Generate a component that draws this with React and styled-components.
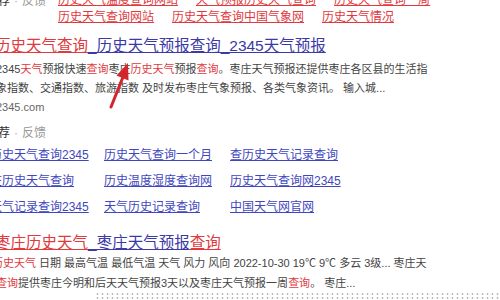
import styled, { createGlobalStyle } from "styled-components";

const sans = `"Liberation Sans", "Noto Sans CJK SC", sans-serif`;

const GlobalStyle = createGlobalStyle`
  html, body {
    margin: 0;
    padding: 0;
    background: #ffffff;
    overflow: hidden;
  }
`;

const topRows = [
  ["历史天气温度查询网站", "天气预报历史天气查询", "历史天气查询一周"],
  ["历史天气查询网站", "历史天气查询中国气象网", "历史天气情况"],
];

const related = [
  "查历史天气查询2345",
  "历史天气查询一个月",
  "查历史天气记录查询",
  "枣庄历史天气查询",
  "历史温度湿度查询网",
  "历史天气查询网2345",
  "查天气记录查询2345",
  "天气历史记录查询",
  "中国天气网官网",
];

const Recommend = () => (
  <RecommendRow>
    <strong>推荐</strong>
    <Dot>·</Dot>
    <span>反馈</span>
  </RecommendRow>
);

const App = () => {
  return (
    <Screen>
      <GlobalStyle />
      <Page>
        <TopBlock>
          <LabelCol>
            <Recommend />
          </LabelCol>
          <div>
            {topRows.map((row, i) => (
              <LinkRow key={i}>
                {row.map((t) => (
                  <RedLink key={t}>{t}</RedLink>
                ))}
              </LinkRow>
            ))}
          </div>
        </TopBlock>

        <Title>
          <Hl $tone="red">历史天气查询</Hl>
          <Hl $tone="blue">_历史天气预报查询_2345天气预报</Hl>
        </Title>
        <DescLine>
          2345<Em>天气</Em>预报快速<Em>查询</Em>枣庄<Em>历史天气</Em>预报
          <Em>查询</Em>。枣庄天气预报还提供枣庄各区县的生活指
        </DescLine>
        <DescLine>
          象指数、交通指数、旅游指数 及时发布枣庄气象预报、各类气象资讯。 输入城...
        </DescLine>
        <Url>2345.com</Url>

        <Recommend />
        <RelatedGrid>
          {related.map((t) => (
            <RelLink key={t}>{t}</RelLink>
          ))}
        </RelatedGrid>

        <Title $gap={13}>
          <Hl $tone="red">枣庄历史天气</Hl>
          <Hl $tone="blue">_枣庄天气预报</Hl>
          <Hl $tone="red">查询</Hl>
        </Title>
        <DescLine $indent={-4} $lh={20}>
          <Em>历史天气</Em> 日期 最高气温 最低气温 天气 风力 风向 2022-10-30 19℃ 9℃
          多云 3级... 枣庄天
        </DescLine>
        <DescLine $lh={20}>
          <Em>查询</Em>提供枣庄今明和后天天气预报3天以及枣庄天气预报一周<Em>查询</Em>。 枣庄...
        </DescLine>
        <Dotted />
      </Page>

      <Arrow viewBox="0 0 500 300">
        <line x1="111" y1="107" x2="123" y2="77" stroke="#d3262c" strokeWidth="3" strokeLinecap="round" />
        <polygon points="128,63 128.5,80.5 116.5,75.5" fill="#d3262c" />
      </Arrow>
    </Screen>
  );
};

const Screen = styled.div`
  position: relative;
  width: 500px;
  height: 300px;
  overflow: hidden;
  font-family: ${sans};
`;

const Page = styled.div`
  display: flex;
  flex-direction: column;
  align-items: flex-start;
  margin-left: -4px;
`;

const TopBlock = styled.div`
  display: flex;
  margin-top: -8px;
`;

const LabelCol = styled.div`
  width: 62px;
  flex-shrink: 0;
`;

const RecommendRow = styled.div`
  display: flex;
  align-items: center;
  margin-left: -10px;
  height: 18px;
  font-size: 12px;
  line-height: 18px;
  color: #9a9a9a;
  white-space: nowrap;

  strong {
    font-weight: normal;
    color: #333333;
  }
`;

const Dot = styled.span`
  padding: 0 4px;
  color: #b0b0b0;
`;

const LinkRow = styled.div`
  display: flex;
  gap: 18px;
  height: 17px;
  line-height: 17px;
  white-space: nowrap;
`;

const RedLink = styled.span`
  font-size: 12px;
  color: #e0393e;
  text-decoration: underline;
`;

const Title = styled.div`
  margin-top: ${(p) => (p.$gap ?? 10)}px;
  margin-left: -1px;
  font-size: 15.5px;
  line-height: 20px;
  white-space: nowrap;
`;

const Hl = styled.span`
  color: ${(p) => (p.$tone === "red" ? "#e0393e" : "#3b3aa6")};
  text-decoration: underline;
`;

const DescLine = styled.div`
  margin-top: ${(p) => (p.$lh ? 0 : 4)}px;
  margin-left: ${(p) => p.$indent ?? 0}px;
  font-size: 11px;
  line-height: ${(p) => p.$lh ?? 19}px;
  color: #444444;
  white-space: nowrap;

  & + & {
    margin-top: 0;
  }
`;

const Em = styled.span`
  color: #e0393e;
`;

const Url = styled.div`
  font-size: 11px;
  line-height: 18px;
  color: #666666;
  margin-bottom: 8px;
`;

const RelatedGrid = styled.div`
  display: grid;
  grid-template-columns: repeat(3, 126px);
  grid-auto-rows: 26px;
  margin-left: -18px;
`;

const RelLink = styled.span`
  font-size: 12px;
  line-height: 26px;
  color: #3f47c0;
  text-decoration: underline;
  white-space: nowrap;
`;

const Dotted = styled.div`
  align-self: stretch;
  margin: -1px 0 0 99px;
  height: 8px;
  background-image: radial-gradient(circle, #b8b8c0 0.8px, transparent 1.2px);
  background-size: 5px 4px;
`;

const Arrow = styled.svg`
  position: absolute;
  left: 0;
  top: 0;
  width: 500px;
  height: 300px;
  pointer-events: none;
`;

export default App;
